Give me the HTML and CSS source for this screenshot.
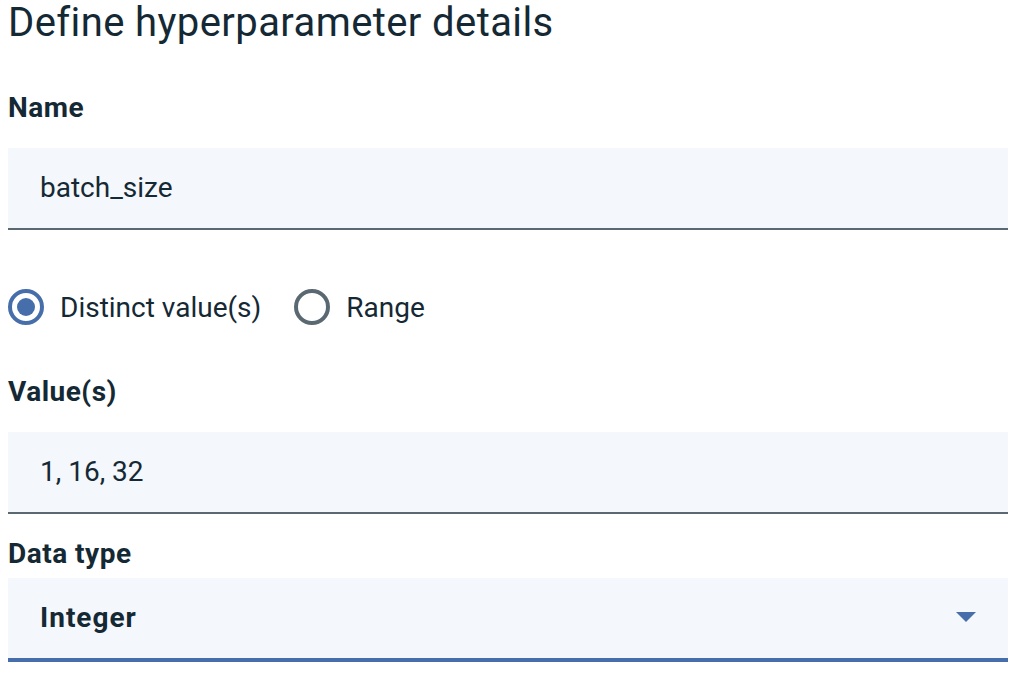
FILE: index.html
```html
<!DOCTYPE html>
<html lang="en">
<head>
<meta charset="utf-8">
<title>Define hyperparameter details</title>
<link rel="stylesheet" href="styles.css">
</head>
<body>
<main class="page">
  <h1 class="title">Define hyperparameter details</h1>

  <div class="label label-name">Name</div>
  <div class="field">batch_size</div>

  <div class="radios">
    <div class="radio">
      <span class="radio-ring checked"><span class="radio-dot"></span></span>
      <span class="radio-text">Distinct value(s)</span>
    </div>
    <div class="radio">
      <span class="radio-ring"></span>
      <span class="radio-text">Range</span>
    </div>
  </div>

  <div class="label label-values">Value(s)</div>
  <div class="field">1, 16, 32</div>

  <div class="label label-type">Data type</div>
  <div class="field select">
    <span class="select-text">Integer</span>
    <svg class="select-arrow" width="20" height="10" viewBox="0 0 20 10" aria-hidden="true"><path d="M0 0h20L10 10z"/></svg>
  </div>
</main>
</body>
</html>
```

FILE: styles.css
```css
html, body {
  margin: 0;
  padding: 0;
  background: #ffffff;
}

body {
  font-family: Roboto, "Noto Sans", "Liberation Sans", sans-serif;
  color: #152935;
}

.page {
  width: 1000px;
  padding: 0 8px;
}

.title {
  margin: 0;
  font-size: 40px;
  font-weight: 400;
  line-height: 46px;
  letter-spacing: 0.4px;
}

.label {
  font-size: 28px;
  font-weight: 700;
  line-height: 36px;
  letter-spacing: 0.5px;
}

.label-name { margin-top: 44px; }
.label-values { margin-top: 47px; }
.label-type { margin-top: 22px; }

.field {
  margin-top: 22px;
  height: 80px;
  background: #f4f7fb;
  border-bottom: 2px solid #5a6872;
  padding: 0 32px;
  font-size: 28px;
  line-height: 80px;
}

.label-type + .field { margin-top: 6px; }

.select {
  display: flex;
  align-items: center;
  justify-content: space-between;
  border-bottom: 4px solid #466eaa;
  font-weight: 700;
}

.select-text {
  letter-spacing: 1px;
}

.select-arrow {
  fill: #466eaa;
  margin-top: -2px;
}

.radios {
  margin-top: 57px;
  height: 40px;
  display: flex;
  align-items: center;
  gap: 33px;
}

.radio {
  display: flex;
  align-items: center;
  gap: 16px;
  font-size: 28px;
}

.radio-ring {
  box-sizing: border-box;
  width: 36px;
  height: 36px;
  border-radius: 50%;
  border: 4px solid #5a6872;
  display: flex;
  align-items: center;
  justify-content: center;
}

.radio-ring.checked {
  border-color: #466eaa;
}

.radio-dot {
  width: 18px;
  height: 18px;
  border-radius: 50%;
  background: #466eaa;
}
```
